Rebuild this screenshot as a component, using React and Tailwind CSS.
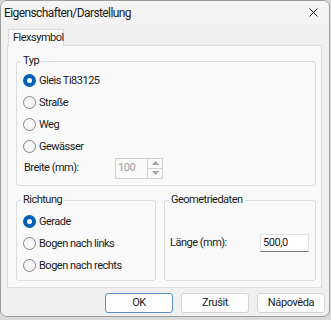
import React from "react";

const font = { fontFamily: "Roboto, 'Noto Sans', sans-serif" };

function Radio({ checked, label }) {
  return (
    <div className="flex items-center h-[22px] pl-[6px] gap-[3px]">
      {checked ? (
        <span className="w-[13px] h-[13px] rounded-full bg-[#005fb8] flex items-center justify-center">
          <span className="w-[5px] h-[5px] rounded-full bg-white" />
        </span>
      ) : (
        <span className="w-[13px] h-[13px] rounded-full border border-[#858585] bg-[#f6f6f6]" />
      )}
      <span className="text-[11px] tracking-[-0.5px] text-[#1a1a1a] leading-none">{label}</span>
    </div>
  );
}

function Group({ title, className, children }) {
  return (
    <fieldset className={"border border-[#dcdcdc] rounded-[3px] px-0 " + className}>
      <legend className="ml-[4px] px-[2px] text-[11px] tracking-[-0.5px] leading-[14px] text-[#1a1a1a]">{title}</legend>
      {children}
    </fieldset>
  );
}

function Button({ children, primary }) {
  return (
    <div
      className={
        "w-[68px] h-[20px] flex items-center justify-center rounded-[3px] text-[11px] tracking-[-0.4px] text-[#1a1a1a] bg-[#fdfdfd] border " +
        (primary ? "border-[#5b8fc9]" : "border-[#d3d3d3]")
      }
    >
      {children}
    </div>
  );
}

export default function App() {
  return (
    <div className="w-[331px] h-[320px] bg-[#d9d9d9] overflow-hidden" style={font}>
      <div className="w-[330px] h-[317px] bg-[#f0f0f0] border border-[#9c9c9c] rounded-[7px] flex flex-col overflow-hidden">
        <div className="h-[23px] bg-[#f4f4f4] flex items-center justify-between pl-[3px] pr-[11px]">
          <span className="text-[12px] tracking-[-0.6px] text-[#1a1a1a]">Eigenschaften/Darstellung</span>
          <svg width="9" height="9" viewBox="0 0 9 9">
            <path d="M0.5 0.5 L8.5 8.5 M8.5 0.5 L0.5 8.5" stroke="#1a1a1a" strokeWidth="1" />
          </svg>
        </div>
        <div className="pl-[6px] pt-[5px]">
          <div className="flex">
            <div className="ml-[1px] h-[17px] w-[56px] pl-[4px] flex items-center bg-[#f9f9f9] border border-b-0 border-[#dcdcdc] text-[11px] tracking-[-0.5px] text-[#1a1a1a] relative z-10 -mb-px">
              Flexsymbol
            </div>
          </div>
          <div className="w-[315px] h-[243px] bg-[#f9f9f9] border border-[#dcdcdc] pl-[8px] pt-[8px]">
            <Group title="Typ" className="w-[300px] h-[132px] pt-[1px]">
              <Radio checked label="Gleis Ti83125" />
              <Radio label="Straße" />
              <Radio label="Weg" />
              <Radio label="Gewässer" />
              <div className="flex items-center h-[22px] pl-[7px]">
                <span className="w-[91px] text-[11px] tracking-[-0.5px] text-[#1a1a1a]">Breite (mm):</span>
                <div className="w-[48px] h-[21px] border border-[#d0d0d0] bg-[#f9f9f9] flex">
                  <span className="flex-1 pl-[2px] text-[11px] tracking-[-0.4px] text-[#a0a0a0] flex items-center">100</span>
                  <div className="w-[15px] flex flex-col border-l border-[#d0d0d0]">
                    <div className="flex-1 flex items-center justify-center border-b border-[#d0d0d0]">
                      <svg width="7" height="4" viewBox="0 0 7 4"><path d="M0 4 L3.5 0 L7 4 Z" fill="#a0a0a0" /></svg>
                    </div>
                    <div className="flex-1 flex items-center justify-center">
                      <svg width="7" height="4" viewBox="0 0 7 4"><path d="M0 0 L3.5 4 L7 0 Z" fill="#a0a0a0" /></svg>
                    </div>
                  </div>
                </div>
              </div>
            </Group>
            <div className="flex gap-[8px] mt-[7px]">
              <Group title="Richtung" className="w-[140px] h-[88px] pt-[3px]">
                <Radio checked label="Gerade" />
                <Radio label="Bogen nach links" />
                <Radio label="Bogen nach rechts" />
              </Group>
              <Group title="Geometriedaten" className="w-[152px] h-[88px]">
                <div className="flex items-center pl-[5px] mt-[27px]">
                  <span className="w-[90px] text-[11px] tracking-[-0.5px] text-[#1a1a1a]">Länge (mm):</span>
                  <div className="w-[49px] h-[18px] bg-white border border-[#e2e2e2] border-b-[#7a7a7a] flex items-center pl-[2px] text-[11px] tracking-[-0.4px] text-[#1a1a1a]">
                    500,0
                  </div>
                </div>
              </Group>
            </div>
          </div>
          <div className="flex justify-end gap-[8px] pr-[4px] mt-[5px]">
            <Button primary>OK</Button>
            <Button>Zrušit</Button>
            <Button>Nápověda</Button>
          </div>
        </div>
      </div>
    </div>
  );
}
